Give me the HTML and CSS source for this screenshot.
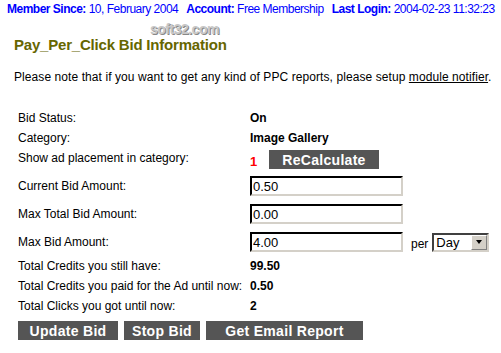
FILE: index.html
```html
<!DOCTYPE html>
<html lang="en">
<head>
    <meta charset="UTF-8">
    <title>Pay Per Click Bid Information</title>
    <link rel="stylesheet" href="styles.css">
</head>
<body>
    <div class="topbar">
        <b>Member Since:</b> 10, February 2004<span class="sep"></span><b>Account:</b> Free Membership<span class="sep"></span><b>Last Login:</b> 2004-02-23 11:32:23
    </div>

    <span class="watermark">soft32.com</span>

    <h1 class="title">Pay_Per_Click Bid Information</h1>

    <p class="note">Please note that if you want to get any kind of PPC reports, please setup <a href="#">module notifier</a>.</p>

    <div class="bid-table">
        <div class="row">
            <span class="label">Bid Status:</span>
            <b>On</b>
        </div>
        <div class="row">
            <span class="label">Category:</span>
            <b>Image Gallery</b>
        </div>
        <div class="row row-place">
            <span class="label">Show ad placement in category:</span>
            <span class="cell"><b class="place">1</b><button class="btn btn-recalc">ReCalculate</button></span>
        </div>
        <div class="row row-input">
            <span class="label">Current Bid Amount:</span>
            <input class="amount" type="text" value="0.50">
        </div>
        <div class="row row-input">
            <span class="label">Max Total Bid Amount:</span>
            <input class="amount" type="text" value="0.00">
        </div>
        <div class="row row-input">
            <span class="label">Max Bid Amount:</span>
            <span class="cell">
                <input class="amount" type="text" value="4.00">
                <span class="per">per</span>
                <span class="select">Day<span class="arrow"></span></span>
            </span>
        </div>
        <div class="row">
            <span class="label">Total Credits you still have:</span>
            <b>99.50</b>
        </div>
        <div class="row">
            <span class="label">Total Credits you paid for the Ad until now:</span>
            <b>0.50</b>
        </div>
        <div class="row">
            <span class="label">Total Clicks you got until now:</span>
            <b>2</b>
        </div>
    </div>

    <div class="actions">
        <button class="btn btn-update">Update Bid</button>
        <button class="btn btn-stop">Stop Bid</button>
        <button class="btn btn-email">Get Email Report</button>
    </div>
</body>
</html>
```

FILE: styles.css
```css
body {
    margin: 0;
    background: #fff;
    color: #000;
    font-family: 'Liberation Sans', Arial, sans-serif;
    font-size: 12px;
    position: relative;
}

.topbar {
    color: #0000ff;
    padding: 2px 0 0 7px;
    line-height: 15px;
    white-space: nowrap;
    letter-spacing: -0.5px;
}

.topbar .sep {
    display: inline-block;
    width: 8px;
}

.watermark {
    position: absolute;
    left: 150px;
    top: 23px;
    font-size: 14px;
    line-height: 13px;
    font-weight: bold;
    color: #c8c8c8;
    text-shadow: 1px 1px 0 #888;
    letter-spacing: -0.5px;
}

.title {
    margin: 19px 0 0 14px;
    font-size: 15px;
    line-height: 18px;
    color: #666600;
    letter-spacing: -0.2px;
}

.note {
    margin: 16px 0 0 14px;
    line-height: 15px;
    letter-spacing: 0.08px;
}

.note a {
    color: #000;
}

.bid-table {
    margin: 23px 0 0 18px;
}

.row {
    display: grid;
    grid-template-columns: 232px auto;
    align-items: center;
    height: 20px;
}

.row-place {
    height: 24px;
    align-items: start;
    padding-top: 2px;
    box-sizing: border-box;
}

.row-place .label {
    margin-top: 1px;
}

.row-input {
    height: 28px;
}

.cell {
    display: flex;
    align-items: center;
}

.place {
    color: #ff0000;
    font-size: 13px;
    width: 19px;
    margin-top: 4px;
}

.btn {
    background: #555555;
    color: #fff;
    border: 0;
    font-family: 'Liberation Sans', Arial, sans-serif;
    font-weight: bold;
    font-size: 14px;
    height: 19px;
    padding: 0;
    letter-spacing: 0.3px;
}

.btn-recalc {
    width: 110px;
}

.amount {
    width: 148px;
    height: 16px;
    box-sizing: content-box;
    padding: 0 0 0 1px;
    margin: 0;
    border: 2px inset #c0c0c0;
    border-top-color: #404040;
    border-left-color: #404040;
    border-right-color: #d4d0c8;
    border-bottom-color: #d4d0c8;
    font-family: 'Liberation Sans', Arial, sans-serif;
    font-size: 13px;
}

.per {
    margin: 4px 4px 0 8px;
}

.select {
    display: flex;
    align-items: center;
    justify-content: space-between;
    width: 51px;
    height: 15px;
    border: 2px solid #d4d0c8;
    border-top-color: #404040;
    border-left-color: #404040;
    padding-left: 2px;
    font-size: 13px;
}

.arrow {
    width: 16px;
    height: 15px;
    background: #d4d0c8;
    border: 1px solid #808080;
    border-top-color: #fff;
    border-left-color: #fff;
    box-sizing: border-box;
    display: flex;
    align-items: center;
    justify-content: center;
}

.arrow::after {
    content: "";
    border-left: 3.5px solid transparent;
    border-right: 3.5px solid transparent;
    border-top: 4px solid #000;
}

.actions {
    display: flex;
    gap: 6px;
    margin: 5px 0 0 18px;
}

.btn-update {
    width: 100px;
}

.btn-stop {
    width: 76px;
}

.btn-email {
    width: 157px;
}
```
